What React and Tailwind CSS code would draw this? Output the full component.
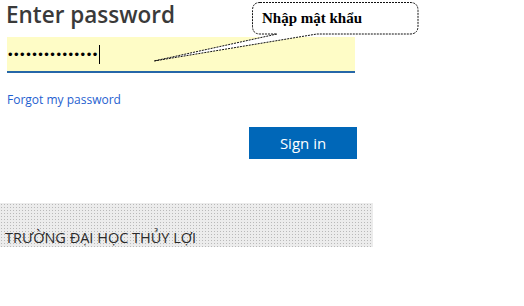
import React from "react";

const sans = { fontFamily: '"Open Sans", "Noto Sans", sans-serif' };

function Callout() {
  return (
    <div className="absolute left-[150px] top-0 w-[272px] h-[66px]">
      <svg width="272" height="66" viewBox="0 0 272 66" className="absolute inset-0">
        <path
          d="M110 2.5 H260 Q268 2.5 268 10.5 V26 Q268 34 260 34 H167 L4 61 L127 34 H110 Q102.5 34 102.5 26 V10.5 Q102.5 2.5 110 2.5 Z"
          fill="#fff"
          stroke="#111"
          strokeWidth="1"
          strokeDasharray="2 1"
        />
      </svg>
      <span
        className="absolute left-[112px] top-[8px] text-[15px] font-bold text-black leading-[20px]"
        style={{ fontFamily: '"Liberation Serif", serif' }}
      >
        Nhập mật khẩu
      </span>
    </div>
  );
}

export default function App() {
  return (
    <div className="relative w-[524px] h-[306px] bg-white overflow-hidden" style={sans}>
      <h1 className="pl-[6px] text-[22.5px] leading-[30px] font-semibold text-[#3a3a3a]">
        Enter password
      </h1>

      <div className="ml-[7px] mt-[7px] w-[348px] h-[36px] bg-[#fefcc6] border-b-2 border-[#2667a8] flex items-center pl-[1px]">
        <span
          className="text-[13px] tracking-[1.5px] text-black leading-none"
          style={{ fontFamily: '"Liberation Sans", sans-serif' }}
        >
          •••••••••••••••
        </span>
        <span className="w-px h-[19px] bg-black" />
      </div>

      <a className="block ml-[7px] mt-[19px] text-[12px] leading-[16px] text-[#1f5fd0] w-fit">
        Forgot my password
      </a>

      <div className="flex mt-[19px] pl-[249px]">
        <button className="w-[108px] h-[32px] bg-[#0067b8] text-white text-[15px] leading-none">
          Sign in
        </button>
      </div>

      <div className="mt-[44px] w-[373px] h-[44px] bg-[#ececec] bg-[image:radial-gradient(#b9b9b9_0.8px,transparent_0.9px)] bg-[size:3px_3px] flex items-end pl-[5px]">
        <span className="text-[14.5px] leading-[19px] text-[#2a2a2a]">
          TRƯỜNG ĐẠI HỌC THỦY LỢI
        </span>
      </div>

      <Callout />
    </div>
  );
}
